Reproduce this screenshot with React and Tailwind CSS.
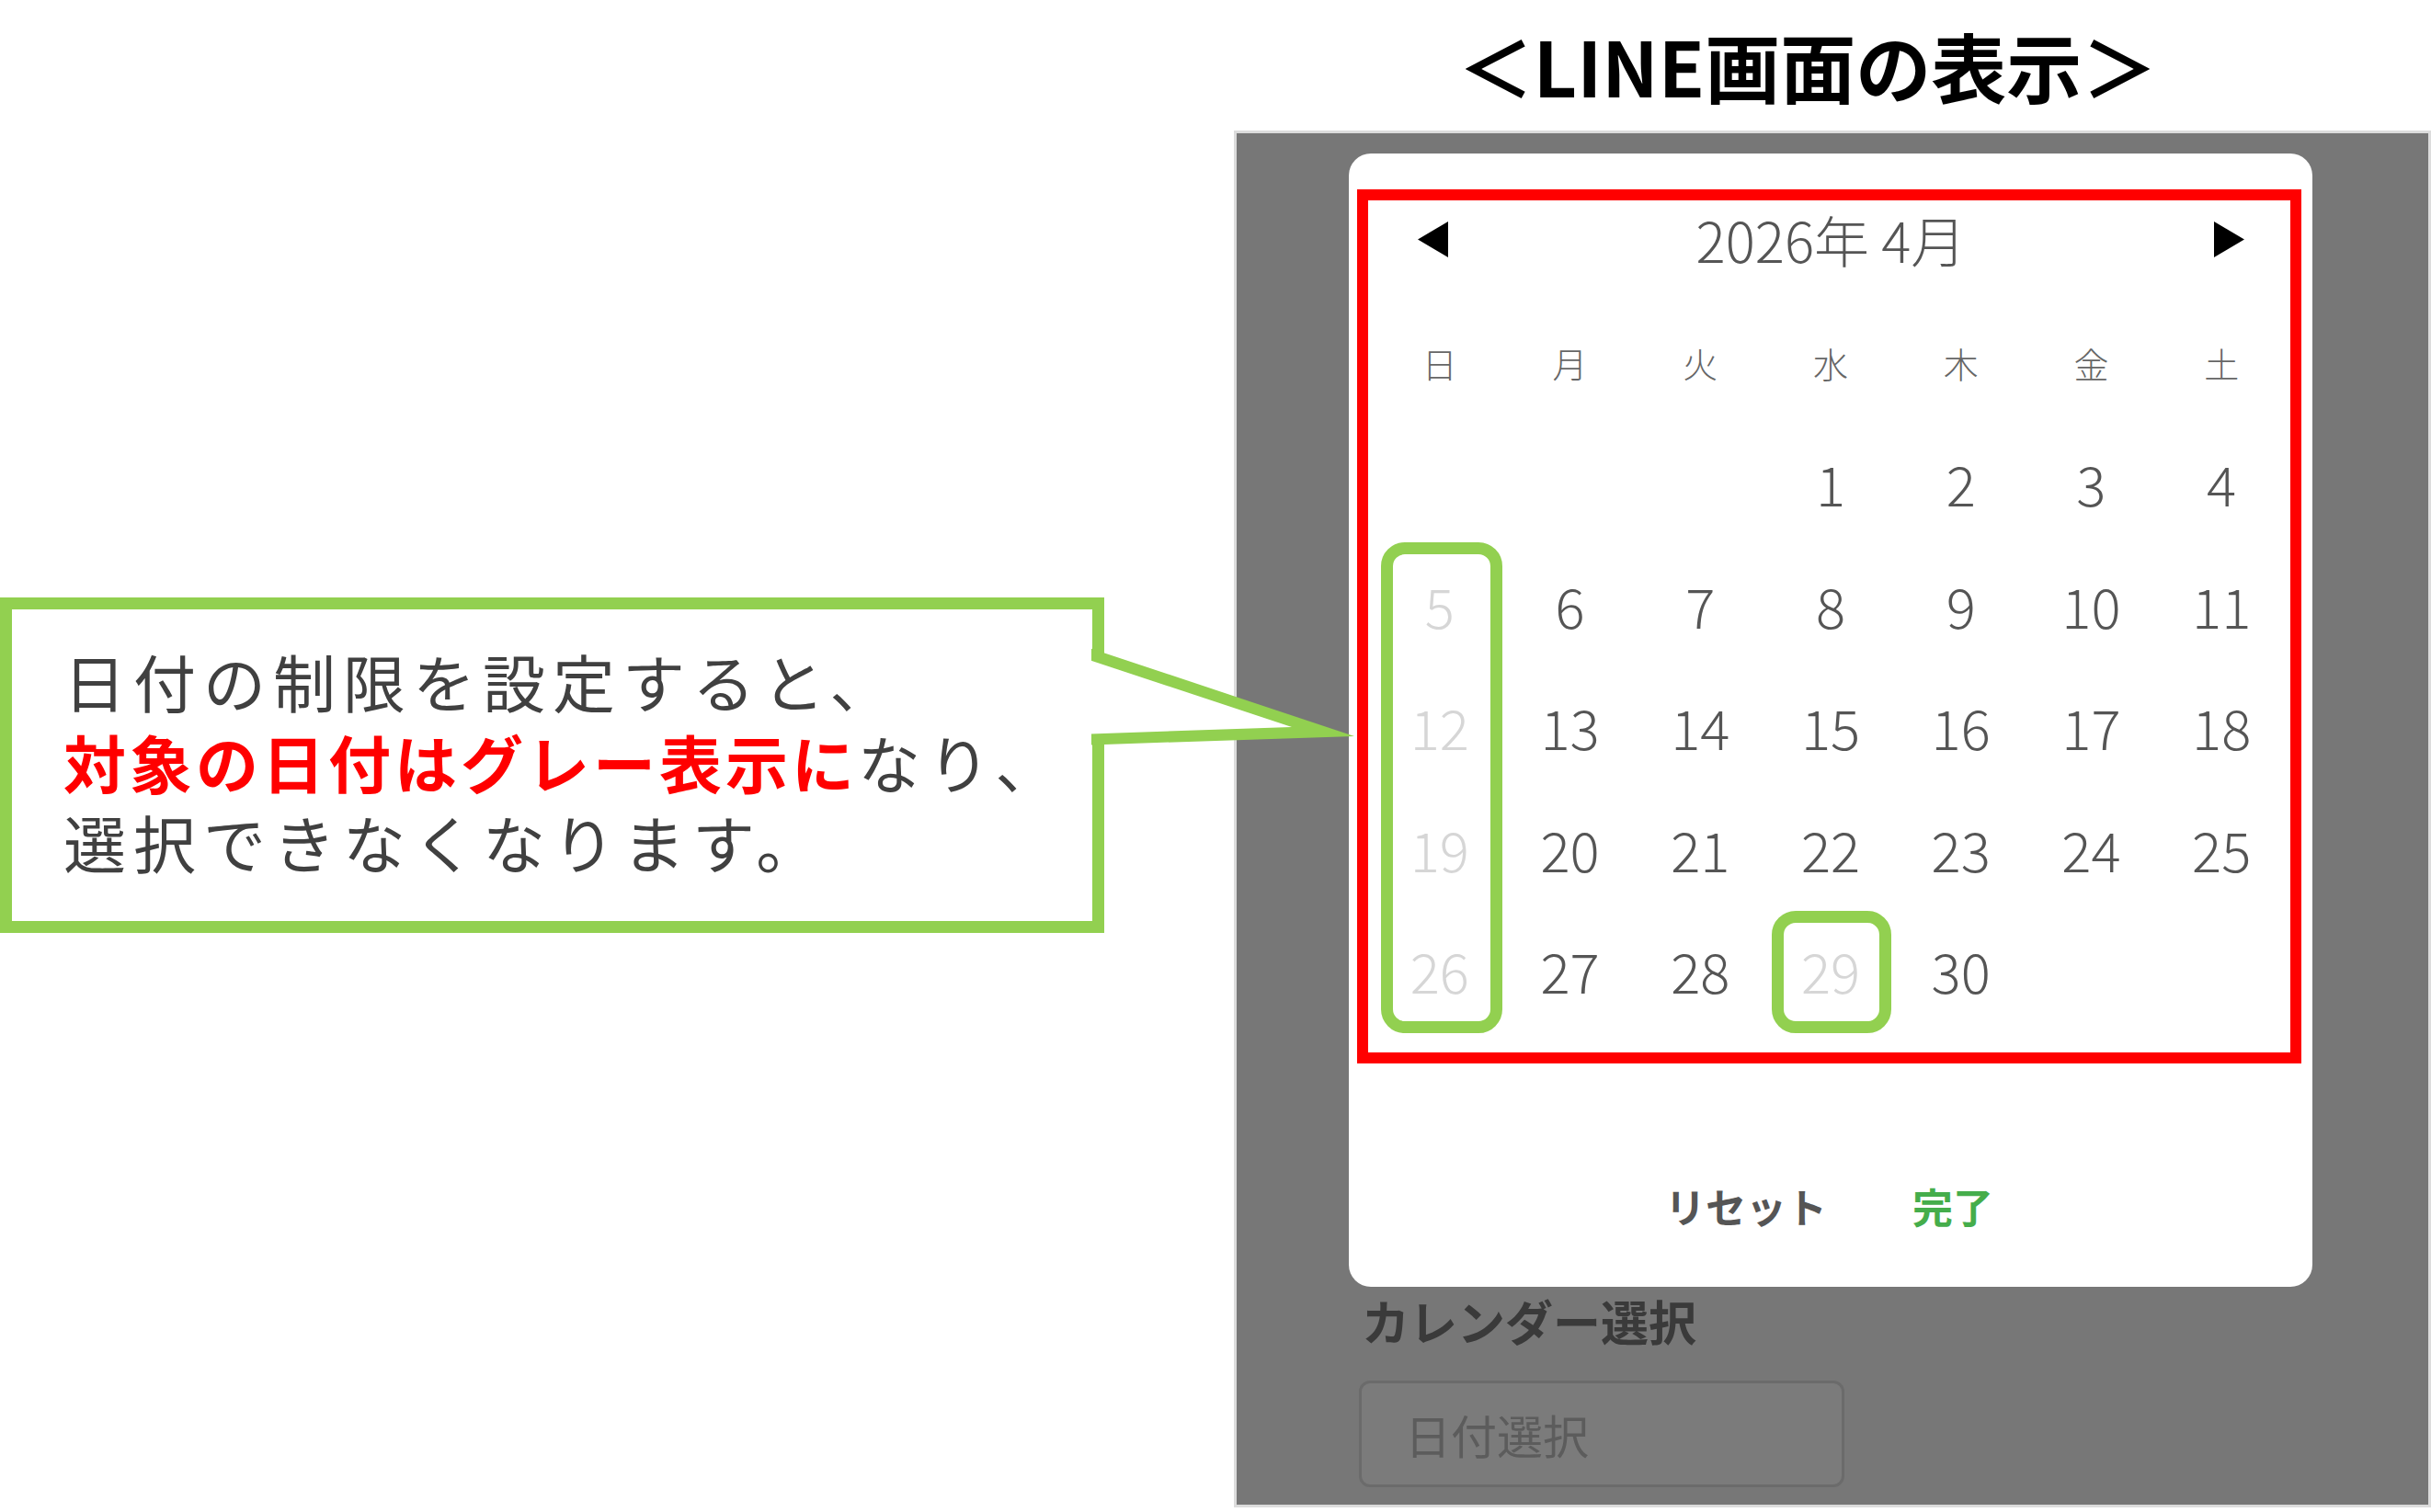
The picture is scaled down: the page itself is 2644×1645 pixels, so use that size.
const weekdays = ['日', '月', '火', '水', '木', '金', '土'];

// April 2026 starts on Wednesday
const cells = [null, null, null, ...Array.from({ length: 30 }, (_, i) => i + 1)];
const disabled = [5, 12, 19, 26, 29];

function Arrow({ dir }) {
  return (
    <svg width="33" height="39" viewBox="0 0 33 39">
      {dir === 'left' ? <polygon points="33,0 0,19.5 33,39" fill="#000" /> : <polygon points="0,0 33,19.5 0,39" fill="#000" />}
    </svg>
  );
}

function Calendar() {
  return (
    <div className="w-[1027px] h-[951px] border-[12px] border-[#ff0000] shrink-0">
      <div className="h-[84px] flex items-center justify-between pl-[54px] pr-[50px]">
        <Arrow dir="left" />
        <span className="text-[60px] leading-none text-[#555555] font-light">2026年 4月</span>
        <Arrow dir="right" />
      </div>
      <div className="ml-[7px] w-[992px] mt-[60px] h-[66px] grid grid-cols-7 items-center text-center text-[38px] leading-none text-[#666666] font-light">
        {weekdays.map((w) => (
          <span key={w}>{w}</span>
        ))}
      </div>
      <div className="relative ml-[7px] w-[992px] mt-[34px] grid grid-cols-7 auto-rows-[132.5px]">
        {cells.map((d, i) => (
          <div
            key={i}
            className={`flex items-center justify-center text-[60px] leading-none font-light -translate-y-[3px] ${disabled.includes(d) ? 'text-[#d6d6d6]' : 'text-[#555555]'}`}
          >
            {d}
          </div>
        ))}
        <div className="absolute left-[7px] top-[128px] w-[132px] h-[534px] border-[13px] border-[#92d050] rounded-[26px]" />
        <div className="absolute left-[432px] top-[529px] w-[130px] h-[133px] border-[13px] border-[#92d050] rounded-[26px]" />
      </div>
    </div>
  );
}

export default function App() {
  return (
    <div className="relative w-[2644px] h-[1645px] bg-white flex overflow-hidden font-['Noto_Sans_CJK_JP','Noto_Sans',sans-serif]">
      <div className="w-[1201px] shrink-0 pt-[650px]">
        <div className="h-[365px] border-[13px] border-[#92d050] pl-[56px] pt-[34px] text-[68px] leading-[87.5px] tracking-[8px] text-[#404040] whitespace-nowrap">
          <p>日付の制限を設定すると、</p>
          <p>
            <span className="text-[#ff0000] font-bold tracking-[4px]">対象の日付はグレー表示に</span>なり、
          </p>
          <p>選択できなくなります。</p>
        </div>
      </div>

      <div className="ml-[141px] w-[1302px] flex flex-col shrink-0">
        <div className="h-[142px] flex items-center justify-center pr-[54px] text-[82px] font-bold leading-none text-black">
          ＜LINE画面の表示＞
        </div>
        <div className="h-[1498px] border-[3px] border-[#dcdcdc] bg-[#777777] flex flex-col">
          <div className="ml-[122px] mt-[22px] w-[1048px] h-[1233px] rounded-[24px] bg-white pt-[39px] pl-[9px] flex flex-col shrink-0">
            <Calendar />
            <div className="mt-[125px] w-[1027px] h-[60px] flex items-center justify-center gap-[93px] text-[44px] font-bold leading-none">
              <span className="text-[#555555]">リセット</span>
              <span className="text-[#45ad4b]">完了</span>
            </div>
          </div>
          <div className="mt-[7px] ml-[136px] text-[52px] font-bold leading-[60px] text-[#3a3a3a]">カレンダー選択</div>
          <div className="mt-[35px] ml-[133px] w-[528px] h-[116px] rounded-[12px] border-[3px] border-[#6b6b6b] bg-[#7b7b7b] pl-[47px] flex items-center text-[50px] leading-none text-[#5c5c5c] shrink-0">
            日付選択
          </div>
        </div>
      </div>

      {/* callout pointer */}
      <svg className="absolute left-[1180px] top-[700px] w-[300px] h-[120px] z-10" viewBox="1180 700 300 120">
        <polygon points="1187,705.7 1473,801 1187,810.4" fill="#92d050" />
        <polygon points="1186,718.4 1405,791 1186,798.4" fill="#ffffff" />
      </svg>
    </div>
  );
}
